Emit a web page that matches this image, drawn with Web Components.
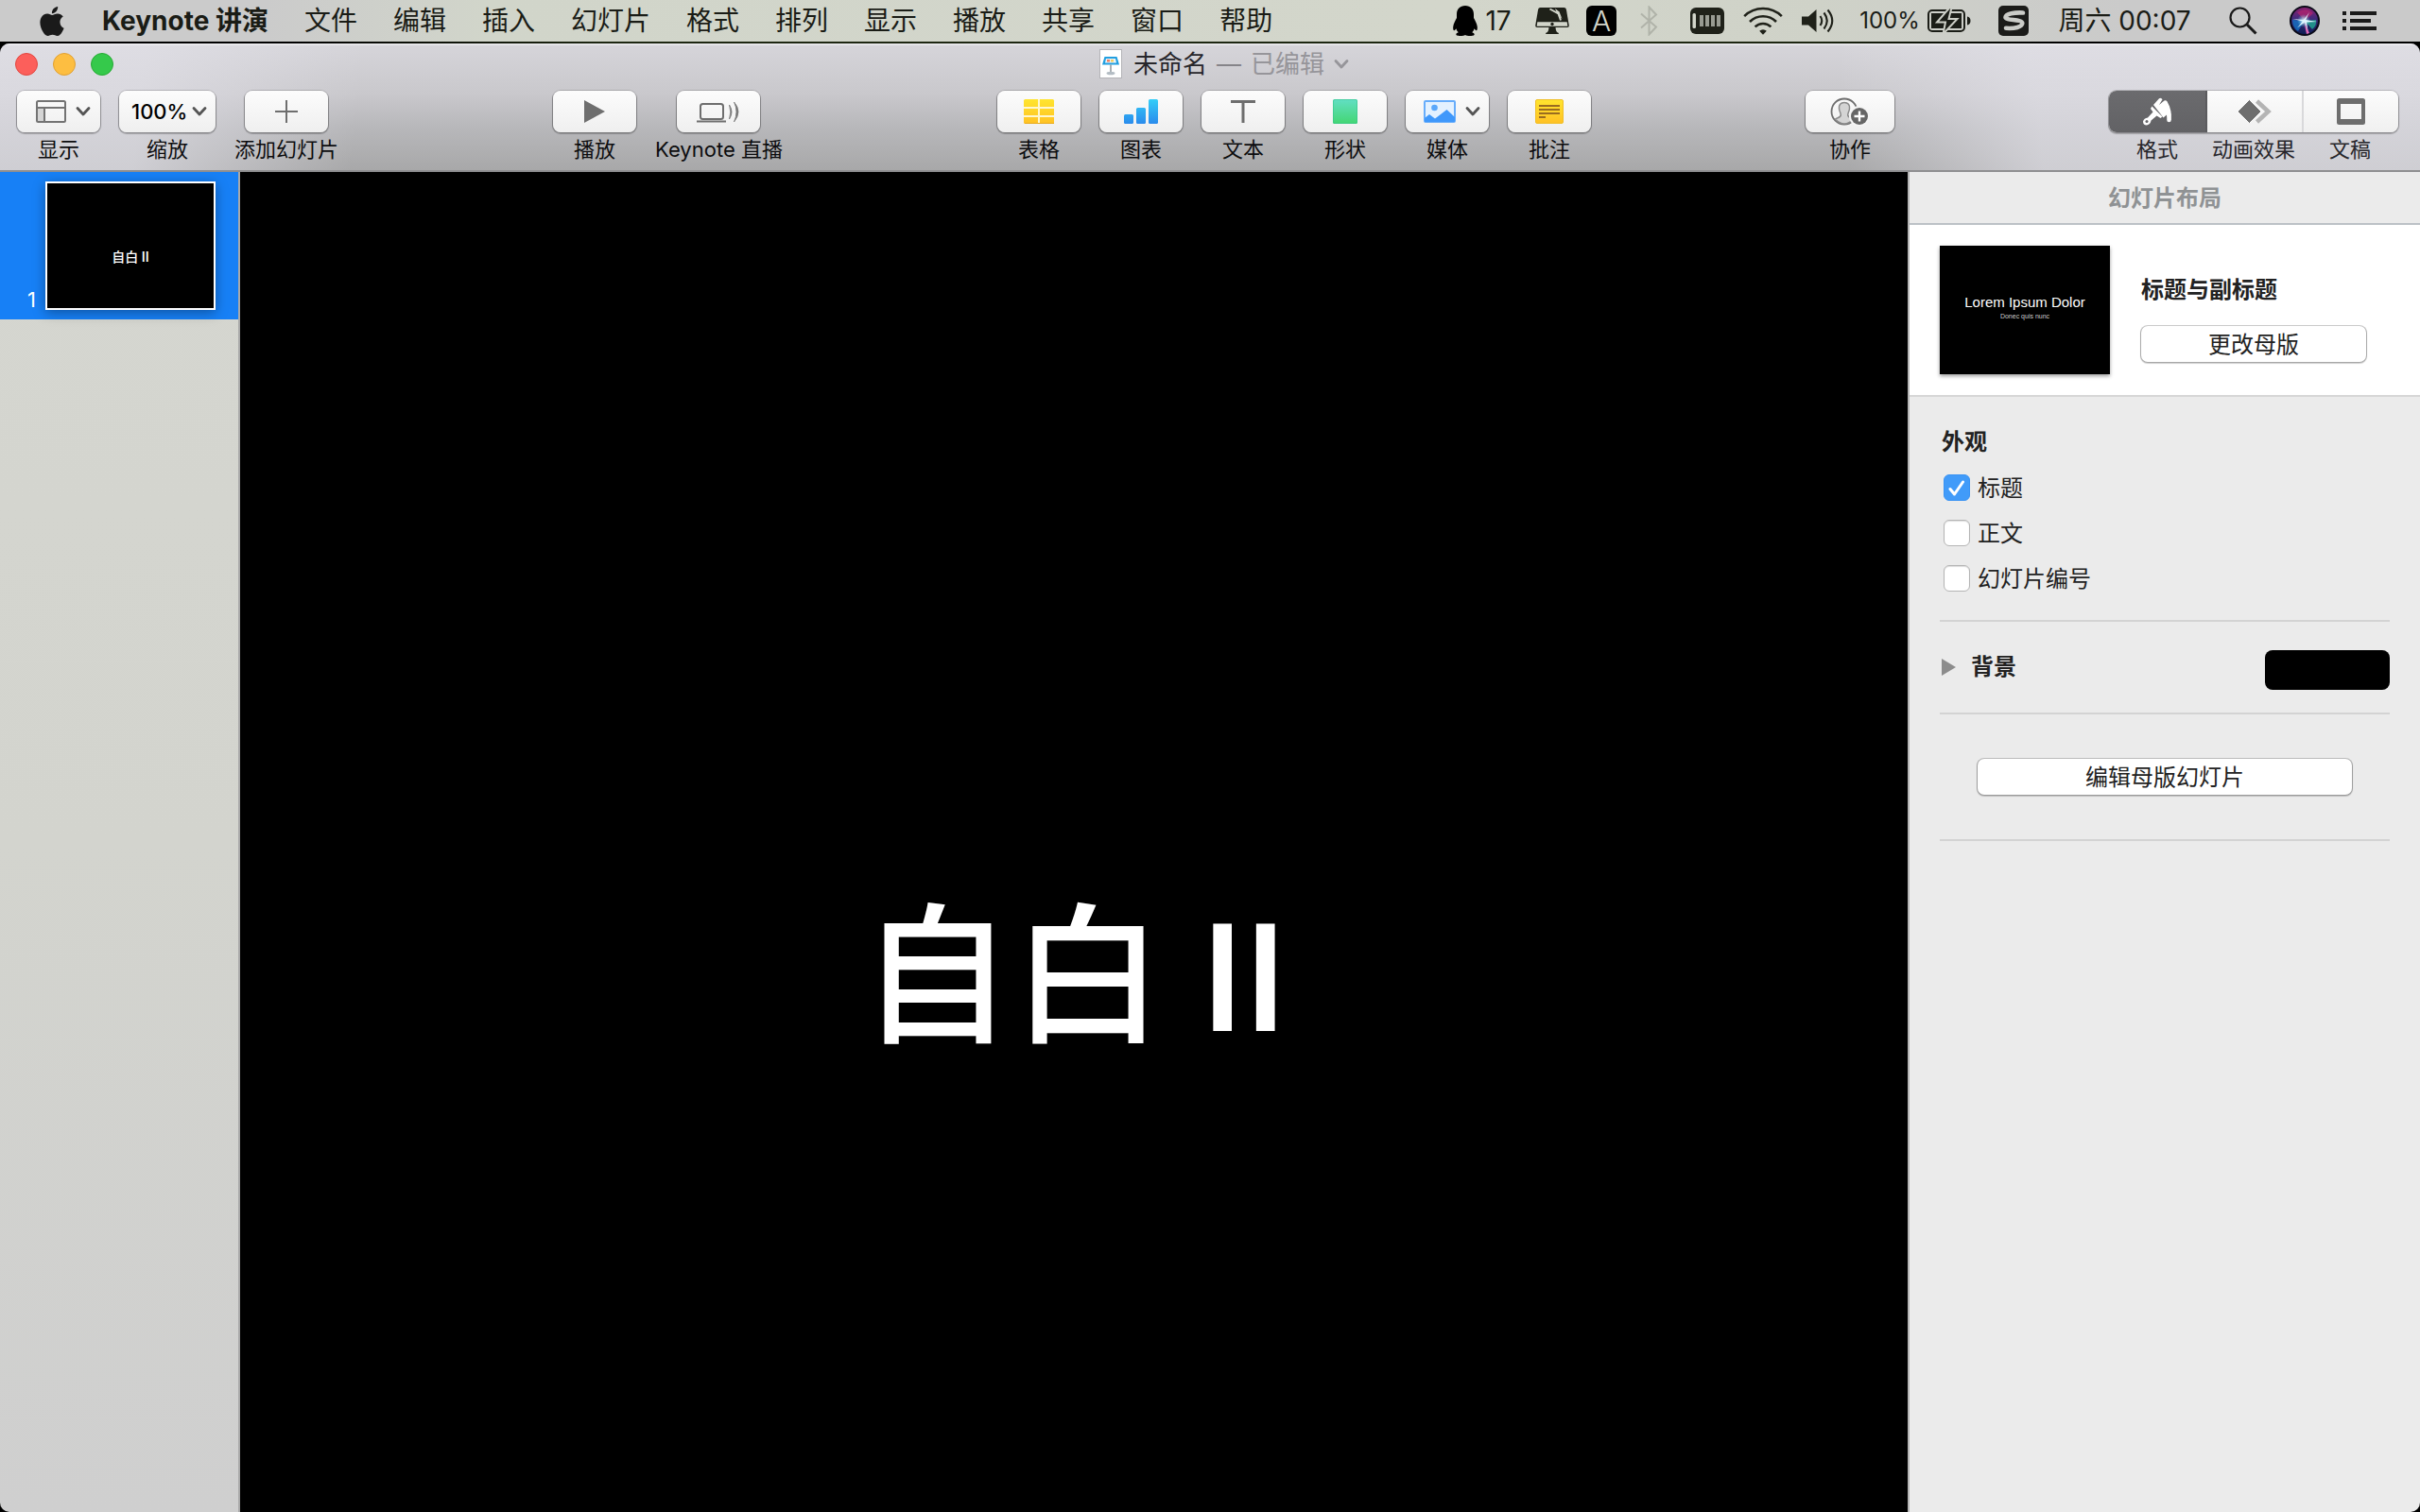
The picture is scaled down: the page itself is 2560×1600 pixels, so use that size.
<!DOCTYPE html>
<html lang="zh-CN">
<head>
<meta charset="utf-8">
<title>Keynote 讲演</title>
<style>
  html, body { height: 100%; margin: 0; }
  body {
    background: #000;
    font-family: Inter, "Noto Sans CJK SC", sans-serif;
    color: #1e1e20;
  }
</style>
</head>
<body>
<keynote-desktop></keynote-desktop>

<script>
const define = (name, markup, setup) => {
  const template = document.createElement('template');
  template.innerHTML = markup;
  customElements.define(name, class extends HTMLElement {
    constructor() {
      super();
      this.attachShadow({ mode: 'open' }).append(template.content.cloneNode(true));
    }
    connectedCallback() {
      if (setup) setup(this, this.shadowRoot);
    }
  });
};

/* Each icon: [width, height, viewBox, drawing] */
const ICONS = {
  apple: [26, 31, '2 0 20 24', '<path fill="#1a1a1a" d="M12.152 6.896c-.948 0-2.415-1.078-3.96-1.04-2.04.027-3.91 1.183-4.961 3.014-2.117 3.675-.546 9.103 1.519 12.09 1.013 1.454 2.208 3.09 3.792 3.039 1.52-.065 2.09-.987 3.935-.987 1.831 0 2.35.987 3.96.948 1.637-.026 2.676-1.48 3.676-2.948 1.156-1.688 1.636-3.325 1.662-3.415-.039-.013-3.182-1.221-3.22-4.857-.026-3.04 2.48-4.494 2.597-4.559-1.429-2.09-3.623-2.324-4.39-2.376-2-.156-3.675 1.09-4.61 1.09zM15.53 3.83c.843-1.012 1.4-2.427 1.245-3.83-1.207.052-2.662.805-3.532 1.818-.78.896-1.454 2.338-1.273 3.714 1.338.104 2.715-.688 3.559-1.701"/>'],
  penguin: [26, 32, '0 0 26 32', '<path d="M13 0C7.500 0 4 3.500 4 9v4c-1 2-3.500 6-3.800 9.500-.2 2.500.3 4 1.200 3.800.6-.1 1.400-1 2-2 .3 1.500 1.200 2.900 2.300 3.900C4.500 28.700 3.300 29.300 3.300 30.300 3.300 32 6 32 8 32c2.200 0 4-.4 5-1 1 .6 2.800 1 5 1 2 0 4.700 0 4.700-1.700 0-1-1.200-1.600-2.400-2.100 1.100-1 2-2.400 2.300-3.900.6 1 1.400 1.900 2 2 .9.200 1.400-1.300 1.200-3.800C25.500 19 23 15 22 13V9c0-5.500-3.500-9-9-9z"/>'],
  imac: [36, 28, '0 0 36 28', '<path fill="#1f2119" d="M5.500 0h25q2 0 2.400 2L35.800 19q.2 2-1.800 2H2q-2 0-1.800-2L3.100 2Q3.500 0 5.500 0z"/><path fill="#d2d5ca" d="M2.300 15.200h31.400l.6 4.600H1.700z"/><circle cx="18" cy="17.500" r="1.700" fill="#1f2119"/><path fill="#1f2119" d="M14.500 21h7q.3 4 1.500 5 2 .6 2 2H11q0-1.400 2-2 1.200-1 1.500-5z"/><path d="M15.500 1.500l9 5 2.500 7" fill="none" stroke="#d2d5ca" stroke-width="2"/><path d="M21 1l4.500 3.500L28.500 12 23 6" fill="#d2d5ca"/>'],
  bluetooth: [20, 32, '0 0 20 32', '<path d="M1 8.500l16 14-7.500 8V1.500l7.500 8-16 14" fill="none" stroke="#b0b3a9" stroke-width="2"/>'],
  memory: [36, 28, '0 0 36 28', '<rect width="36" height="28" rx="6" fill="#1f2119"/><rect x="2.500" y="6" width="3.500" height="16" rx="1.500" fill="#d2d5ca"/><path fill="#989b92" d="M10 8h4v12h-4zM16 8h4v12h-4zM22 8h4v12h-4zM28 8h4v12h-4z"/>'],
  wifi: [42, 30, '0 0 42 30', '<g fill="none" stroke="#1f2119" stroke-width="2.600"><path d="M1.200 10.200a28 28 0 0 1 39.600 0"/><path d="M7 16a20 20 0 0 1 28 0"/><path d="M12.600 21.400a12 12 0 0 1 16.800 0"/></g><path fill="#1f2119" d="M17.200 25.800a5.400 5.400 0 0 1 7.600 0L21 29.700z"/>'],
  volume: [34, 26, '0 0 34 26', '<path fill="#1f2119" d="M0 8.500h7L15.500 1v24L7 17.500H0z"/><g fill="none" stroke="#1f2119" stroke-width="2.100"><path d="M19.500 8q3.500 5 0 10"/><path d="M23.500 4.500q6.500 8.500 0 17"/><path d="M27.500 1.500q9.500 11.500 0 23"/></g>'],
  battery: [46, 26, '0 0 46 26', '<rect x="1" y="2" width="38" height="22" rx="4" fill="none" stroke="#1b1d17" stroke-width="2"/><path fill="#1b1d17" d="M42 8.500q3.500.8 3.500 4.500T42 17.500zM4 5h32v16H4z"/><path d="M23.500-1L10 14.500h9L16.500 27 31.500 11h-9l3-12z" fill="#1b1d17" stroke="#cdcfc7" stroke-width="2"/>'],
  sogou: [32, 32, '0 0 32 32', '<rect width="32" height="32" rx="5" fill="#1b1b19"/><path d="M26 7.500C17 7 8 8.500 7.500 12.200 7.300 16 25 14 25.300 18.500 25.500 22.500 17 24.500 8 23.800" fill="none" stroke="#cbccc8" stroke-width="4.600" stroke-linecap="round"/>'],
  search: [30, 30, '0 0 30 30', '<circle cx="11.500" cy="11.500" r="10" fill="none" stroke="#1a1a1a" stroke-width="2.200"/><path d="M19 19l9.500 9.500" stroke="#1a1a1a" stroke-width="3"/>'],
  siri: [32, 32, '0 0 32 32', '<defs><linearGradient id="s" x1="0" y1="0" x2="0" y2="1"><stop offset="0" stop-color="#8a2070"/><stop offset=".4" stop-color="#432a7c"/><stop offset="1" stop-color="#0c1d55"/></linearGradient><radialGradient id="g"><stop offset="0" stop-color="#fff"/><stop offset="1" stop-color="#5ad0e8" stop-opacity="0"/></radialGradient></defs><circle cx="16" cy="16" r="16" fill="#0a0a18"/><circle cx="16" cy="16" r="14" fill="url(#s)"/><path d="M16 16L8 7q10-6 17 1z" fill="#b0246f" opacity=".75"/><path d="M16 16l12-1q1 6-4 10z" fill="#1fa991" opacity=".8"/><path d="M16 16L3 15q0 8 6 12z" fill="#1473c4" opacity=".8"/><path d="M15 16l3 14 3-1z" fill="#e068b8"/><circle cx="15" cy="16" r="7" fill="url(#g)"/><path d="M3 14l12 1 6-8-4 8 12 2-11 .500 1.500 9-3.500-9-8 6 6-7z" fill="#dff6ff"/>'],
  list: [36, 20, '0 0 36 20', '<path fill="#1a1a1a" d="M0 0h4v4H0zM8 0h28v4H8zM0 8h4v4H0zM8 8h22v4H8zM0 16h4v4H0zM8 16h28v4H8z"/>'],
  doc: [24, 32, '0 0 24 32', '<rect x=".5" y=".5" width="23" height="30" fill="#fff" stroke="#b4b4b8"/><path d="M5.500 8h13l2.500 8.500H3z" fill="#229fe0"/><path d="M7 10h10l1 4.500H6z" fill="#e9f4fb"/><path d="M8 11h3v2.500H8z" fill="#f08060"/><path d="M12 11h3v2.500h-3z" fill="#f4ce62"/><path d="M12 16.500V25" stroke="#8d959b" stroke-width="1.500"/><ellipse cx="12" cy="25.500" rx="4.500" ry="1.800" fill="#b4bdc4"/>'],
  chevron: [16, 12, '0 0 16 12', '<path d="M2 2.500l6 6.500 6-6.500" fill="none" stroke="currentColor" stroke-width="2.800" stroke-linecap="round" stroke-linejoin="round"/>'],
  layout: [32, 24, '0 0 32 24', '<path d="M1 8h8v15H1z" fill="#d5d5d5"/><rect x="1" y="1" width="30" height="22" rx="1.500" fill="none" stroke="#737373" stroke-width="2"/><path d="M1 8h30M9 8v15" stroke="#737373" stroke-width="2"/>'],
  plus: [24, 24, '0 0 24 24', '<path d="M12 0v24M0 12h24" stroke="#6e6e6e" stroke-width="2"/>'],
  play: [22, 24, '0 0 22 24', '<path d="M0 0l22 12L0 24z" fill="#6e6e6e"/>'],
  live: [46, 24, '0 0 46 24', '<rect x="4" y="4" width="24" height="16" rx="2.500" fill="none" stroke="#6e6e6e" stroke-width="2"/><path d="M0 22.500h31" stroke="#6e6e6e" stroke-width="2"/><path d="M34.500 5q5 7.500 0 15q2.500-7.500 0-15zM39.500 2q9 10 0 21q5-11 0-21z" fill="#777" stroke="#777" stroke-width=".8"/>'],
  table: [34, 26, '0 0 34 26', '<defs><linearGradient id="t" x1="0" y1="0" x2="0" y2="1"><stop stop-color="#ffe52e"/><stop offset="1" stop-color="#ffc125"/></linearGradient></defs><rect x="1" width="32" height="26" rx="1.500" fill="url(#t)"/><path d="M17 0v26M1 9h32M1 18h32" stroke="#fff7d0" stroke-width="2"/><path d="M2 25.500h31" stroke="#e8ab1c"/>'],
  chart: [36, 26, '0 0 36 26', '<defs><linearGradient id="c" gradientUnits="userSpaceOnUse" x1="0" y1="0" x2="0" y2="26"><stop stop-color="#34cdf8"/><stop offset="1" stop-color="#2a8bec"/></linearGradient></defs><g fill="url(#c)"><rect y="16" width="10" height="10" rx="1.500"/><rect x="13" y="9" width="10" height="17" rx="1.500"/><rect x="26" width="10" height="26" rx="1.500"/></g>'],
  text: [26, 24, '0 0 26 24', '<path fill="#6e6e6e" d="M0 0h26v3H0zM11.500 2h3v22h-3z"/>'],
  shape: [26, 26, '0 0 26 26', '<defs><linearGradient id="h" x1="0" y1="0" x2="0" y2="1"><stop stop-color="#62dfc4"/><stop offset="1" stop-color="#43d672"/></linearGradient></defs><rect width="26" height="26" rx="1.500" fill="url(#h)"/><rect x=".5" y=".5" width="25" height="25" rx="1.500" fill="none" stroke="#36c48c" opacity=".6"/>'],
  media: [34, 24, '0 0 34 24', '<rect x="1" y="1" width="32" height="22" rx="1" fill="#e3f1ff" stroke="#67adfb" stroke-width="2"/><circle cx="11.500" cy="8" r="3.300" fill="#5aa7fa"/><path d="M1 19l5-4 6 4.500L24.500 10 33 18v5H1z" fill="#3f98fb"/>'],
  note: [30, 26, '0 0 30 26', '<defs><linearGradient id="n" x1="0" y1="0" x2="0" y2="1"><stop stop-color="#ffe52e"/><stop offset="1" stop-color="#ffc125"/></linearGradient></defs><rect x=".5" y=".5" width="29" height="25" rx="1.500" fill="url(#n)" stroke="#f0bf28"/><path d="M4 7h22M4 11h22M4 15h22M4 19h7" stroke="#9a6c20" stroke-width="2"/>'],
  person: [42, 30, '0 0 42 30', '<circle cx="15" cy="15" r="13.500" fill="none" stroke="#6e6e6e" stroke-width="1.800"/><path d="M15 5.500c-4 0-6 2.700-5.500 6.500.3 3 1.700 4.500 1.800 6.500.2 3-3.300 2.800-5.800 4.500Q10 28 15 28t9.500-5c-2.500-1.700-6-1.500-5.800-4.500.1-2 1.500-3.500 1.800-6.500.5-3.800-1.500-6.500-5.500-6.500z" fill="#d4d4d4" stroke="#8a8a8a" stroke-width="1.500"/><circle cx="31" cy="20" r="11" fill="#f5f5f5"/><circle cx="31" cy="20" r="9" fill="#666"/><path d="M31 14.500v11M25.500 20h11" stroke="#fff" stroke-width="2.400"/>'],
  brush: [32, 30, '0 0 32 30', '<g fill="#fff"><path d="M12 8L18 1.200q1.300-1 2.600 0L21.500 2.300 18 8l5.500-4.500q1.500-.8 2.800.6L29 9.500l1.500 5.500V24h-3l-1.500-5.500-3.500 3z"/><path d="M10.500 9.500L21.500 20.500 19.500 22 15.500 19.500 9.500 24.500Q9 28.500 5 29.500 1 29.500 1 25.500 2 22 6 21.500L11.500 15.500 9 12z"/></g><circle cx="5" cy="25.500" r="1.500" fill="#66666a"/><path d="M28.500 18v6" stroke="#fff" stroke-width="4.500" stroke-linecap="round"/>'],
  animate: [36, 26, '0 0 36 26', '<path d="M20.500 2l12 11-12 11" fill="none" stroke="#b4b4b4" stroke-width="4.500"/><path d="M12.500 .5L25 13 12.500 25.500 0 13z" fill="#6e6e6e" stroke="#fafafa" stroke-width="1"/>'],
  frame: [30, 28, '0 0 30 28', '<path fill="#6e6e6e" fill-rule="evenodd" d="M2.500 0h25Q30 0 30 2.500v23q0 2.500-2.500 2.500h-25Q0 28 0 25.500v-23Q0 0 2.500 0zM4 6v16h22V6z"/>'],
  triangle: [15, 18, '0 0 15 18', '<path d="M0 0l15 9-15 9z" fill="#8c8c8c"/>'],
  check: [28, 28, '0 0 28 28', '<path d="M7 15.500l4.500 5.500L20.500 8" fill="none" stroke="#fff" stroke-width="3" stroke-linecap="round" stroke-linejoin="round"/>']
};

define('mac-icon', `
  <style>:host{display:block;flex:none} svg{display:block}</style>
`, (el, root) => {
  const [w, h, box, art] = ICONS[el.getAttribute('name')];
  root.innerHTML += `<svg width="${w}" height="${h}" viewBox="${box}" aria-hidden="true">${art}</svg>`;
});

define('status-item', `
  <style>
    :host{display:flex;flex:none;align-items:center;justify-content:center;gap:8px;width:var(--w);height:44px;
      font-size:28px;line-height:44px;white-space:nowrap}
  </style>
  <slot></slot>
`, el => el.style.setProperty('--w', el.getAttribute('width') + 'px'));

define('menu-bar', `
  <style>
    :host{display:flex;justify-content:space-between;height:44px;padding:0 32px 0 42px;color:#1a1c16;
      background:linear-gradient(90deg,#cbcbcb 11%,#d1d5ca 20%,#d3d6cb 60%,#cfd2c8 75%,#cacaca 88%)}
    nav,.status{display:flex;align-items:center}
    nav{gap:38px}
    button{all:unset;font-size:28px;line-height:44px;white-space:nowrap}
    .apple{margin-right:2px}
    .app{font-weight:700}
    .letter{width:32px;height:32px;border-radius:6px;background:#000;color:#d2d5ca;text-align:center;
      font-size:30px;font-weight:300;line-height:32px}
    .percent{font-size:24px}
  </style>
  <nav aria-label="菜单">
    <button class="apple" aria-label="Apple"><mac-icon name="apple"></mac-icon></button>
    <button class="app">Keynote 讲演</button>
    <button>文件</button><button>编辑</button><button>插入</button><button>幻灯片</button>
    <button>格式</button><button>排列</button><button>显示</button><button>播放</button>
    <button>共享</button><button>窗口</button><button>帮助</button>
  </nav>
  <div class="status">
    <status-item width="88"><mac-icon name="penguin"></mac-icon>17</status-item>
    <status-item width="60"><mac-icon name="imac"></mac-icon></status-item>
    <status-item width="44"><span class="letter">A</span></status-item>
    <status-item width="58"><mac-icon name="bluetooth"></mac-icon></status-item>
    <status-item width="64"><mac-icon name="memory"></mac-icon></status-item>
    <status-item width="53"><mac-icon name="wifi"></mac-icon></status-item>
    <status-item width="63"><mac-icon name="volume"></mac-icon></status-item>
    <status-item width="144"><span class="percent">100%</span><mac-icon name="battery"></mac-icon></status-item>
    <status-item width="64"><mac-icon name="sogou"></mac-icon></status-item>
    <status-item width="171">周六 00:07</status-item>
    <status-item width="79"><mac-icon name="search"></mac-icon></status-item>
    <status-item width="52"><mac-icon name="siri"></mac-icon></status-item>
    <status-item width="64"><mac-icon name="list"></mac-icon></status-item>
  </div>
`);

define('title-bar', `
  <style>
    :host{display:grid;grid-template-columns:1fr auto 1fr;align-items:center;height:44px}
    .lights{display:flex;gap:16px;padding-left:16px}
    .lights button{appearance:none;box-sizing:border-box;width:24px;height:24px;margin:0;padding:0;border-radius:50%;
      border:1px solid var(--edge);background:var(--fill)}
    .close{--fill:#fc5f5b;--edge:#e2463f}
    .min{--fill:#fdbe41;--edge:#e0a033}
    .max{--fill:#35c94b;--edge:#27ab35}
    .title{display:flex;align-items:center;gap:10px;padding-left:30px;font-size:26px;line-height:40px;color:#27262b}
    .title button{all:unset;display:flex;align-items:center;gap:10px;color:#96959a}
    h1{margin:0 0 0 2px;font:inherit}
    .dash{color:#858489}
  </style>
  <div class="lights">
    <button class="close" aria-label="关闭"></button>
    <button class="min" aria-label="最小化"></button>
    <button class="max" aria-label="全屏"></button>
  </div>
  <div class="title">
    <mac-icon name="doc"></mac-icon><h1>未命名</h1><span class="dash">—</span>
    <button>已编辑<mac-icon name="chevron"></mac-icon></button>
  </div>
`);

define('tool-item', `
  <style>
    :host{display:flex;flex-direction:column;align-items:center;gap:5px;color:#0c0c0e}
    button{all:unset;box-sizing:border-box;display:flex;align-items:center;justify-content:center;gap:10px;
      width:var(--tool-width,88px);height:44px;border-radius:8px;color:#555;
      background:linear-gradient(#fcfcfc,#efefef);box-shadow:0 0 0 1px #00000026,0 1px 1px 1px #00000038}
    :host([menu]) button{padding-left:10px}
    .label{font-size:22px;line-height:26px;white-space:nowrap}
  </style>
  <button aria-labelledby="l"><slot></slot></button>
  <span class="label" id="l"></span>
`, (el, root) => { root.getElementById('l').textContent = el.getAttribute('label'); });

define('zoom-select', `
  <style>
    :host{display:flex;flex-direction:column;align-items:center;gap:5px;color:#0c0c0e}
    .box{box-sizing:border-box;display:flex;align-items:center;justify-content:center;gap:4px;width:102px;height:44px;padding-left:4px;border-radius:8px;
      color:#555;background:linear-gradient(#fcfcfc,#efefef);box-shadow:0 0 0 1px #00000026,0 1px 1px 1px #00000038}
    select{appearance:none;border:0;padding:0;margin:0;background:none;font:500 22px/30px Inter,sans-serif;color:#000}
    label{font-size:22px;line-height:26px}
  </style>
  <div class="box"><select id="z"><option>100%</option></select><mac-icon name="chevron"></mac-icon></div>
  <label for="z">缩放</label>
`);

define('inspector-tabs', `
  <style>
    :host{display:grid;grid-template-columns:repeat(3,102px);row-gap:5px;text-align:center;color:#27262b}
    .bar{display:grid;grid-template-columns:repeat(3,1fr);height:44px;border-radius:8px;overflow:hidden;
      background:linear-gradient(#fcfcfc,#f0f0f0)}
    .wrap{grid-column:1/-1;border-radius:8px;box-shadow:0 0 0 1px #00000026,0 1px 1px 1px #00000038}
    button{all:unset;display:flex;align-items:center;justify-content:center}
    button + button{border-left:2px solid #d9d9db}
    button.on{background:linear-gradient(#6b6b6e,#626265)}
    button.on + button{border-left-color:#5b5b5e}
    span{font-size:22px;line-height:26px;white-space:nowrap}
  </style>
  <div class="wrap"><div class="bar">
    <button class="on" aria-labelledby="a"><mac-icon name="brush"></mac-icon></button>
    <button aria-labelledby="b"><mac-icon name="animate"></mac-icon></button>
    <button aria-labelledby="c"><mac-icon name="frame"></mac-icon></button>
  </div></div>
  <span id="a">格式</span><span id="b">动画效果</span><span id="c">文稿</span>
`);

define('tool-bar', `
  <style>
    :host{display:flex;justify-content:space-between;align-items:flex-start;padding:6px 23px 9px 18px}
    .group{display:flex;gap:20px}
    .wide{--tool-width:94px}
  </style>
  <div class="group">
    <tool-item menu label="显示"><mac-icon name="layout"></mac-icon><mac-icon name="chevron"></mac-icon></tool-item>
    <zoom-select></zoom-select>
    <tool-item label="添加幻灯片"><mac-icon name="plus"></mac-icon></tool-item>
  </div>
  <div class="group">
    <tool-item label="播放"><mac-icon name="play"></mac-icon></tool-item>
    <tool-item label="Keynote 直播"><mac-icon name="live"></mac-icon></tool-item>
  </div>
  <div class="group">
    <tool-item label="表格"><mac-icon name="table"></mac-icon></tool-item>
    <tool-item label="图表"><mac-icon name="chart"></mac-icon></tool-item>
    <tool-item label="文本"><mac-icon name="text"></mac-icon></tool-item>
    <tool-item label="形状"><mac-icon name="shape"></mac-icon></tool-item>
    <tool-item menu label="媒体"><mac-icon name="media"></mac-icon><mac-icon name="chevron"></mac-icon></tool-item>
    <tool-item label="批注"><mac-icon name="note"></mac-icon></tool-item>
  </div>
  <tool-item class="wide" label="协作"><mac-icon name="person"></mac-icon></tool-item>
  <inspector-tabs></inspector-tabs>
`);

define('slide-navigator', `
  <style>
    :host{display:block;border-right:2px solid #a9a9a9;background:linear-gradient(#d5d6d0,#d3d4ce 50%,#cfcfcf)}
    .row{display:flex;align-items:flex-end;justify-content:flex-end;gap:10px;padding:10px 24px 10px 0;background:#1780f6;color:#fff}
    .num{font-size:22px;line-height:22px}
    .thumb{box-sizing:border-box;display:flex;align-items:center;justify-content:center;width:180px;height:136px;padding-top:24px;
      border:2px solid #fff;background:#000;box-shadow:0 3px 12px #00000059;
      font:500 14px/20px Roboto,"Noto Sans CJK SC",sans-serif}
  </style>
  <div class="row"><span class="num">1</span><div class="thumb">自白 II</div></div>
`);

define('slide-canvas', `
  <style>
    :host{display:flex;align-items:center;justify-content:center;padding-top:292px;background:#000;color:#fff}
    h2{margin:0;font:500 160px/200px Roboto,"Noto Sans CJK SC",sans-serif;white-space:nowrap}
  </style>
  <h2>自白 II</h2>
`);

define('push-button', `
  <style>
    :host{display:block}
    button{all:unset;box-sizing:border-box;display:block;width:100%;height:38px;border-radius:7px;background:#fff;
      text-align:center;font-size:24px;line-height:40px;color:#222;
      box-shadow:0 0 0 1px #00000030,0 1px 1px 1px #00000030}
  </style>
  <button><slot></slot></button>
`);

define('check-option', `
  <style>
    :host{display:flex;align-items:center;gap:8px;height:48px;padding-left:4px}
    .box{display:grid;width:28px;height:28px}
    .box > *{grid-area:1/1}
    input{appearance:none;box-sizing:border-box;width:28px;height:28px;margin:0;border:1px solid #b4b4b4;border-radius:6px;
      background:#fff;box-shadow:inset 0 1px 1px #0002}
    input:checked{background:#419bf9;border-color:#3a93f3;box-shadow:none}
    mac-icon{pointer-events:none;visibility:hidden}
    input:checked + mac-icon{visibility:visible}
    label{padding-top:2px;font-size:24px;line-height:36px;color:#222}
  </style>
  <span class="box"><input type="checkbox" id="i"><mac-icon name="check"></mac-icon></span>
  <label for="i"><slot></slot></label>
`, (el, root) => { root.getElementById('i').checked = el.hasAttribute('checked'); });

define('format-inspector', `
  <style>
    :host{display:block;border-left:2px solid #b5b5b5;background:#ebebeb;font-size:24px;line-height:36px;color:#222}
    h2,h3,p{margin:0;font-size:24px;line-height:36px;font-weight:700}
    header{height:54px;border-bottom:2px solid #bcc1c6}
    header h2{line-height:56px;text-align:center;color:#8f9294}
    .master{display:flex;align-items:center;gap:33px;padding:22px 57px 22px 32px;background:#fff;border-bottom:2px solid #d6d6d6}
    .preview{flex:none;box-sizing:border-box;width:180px;height:136px;padding-top:50px;background:#000;color:#fff;text-align:center;
      box-shadow:0 2px 4px #0006;font:500 15px/20px "Liberation Sans",sans-serif}
    .preview small{display:block;font-size:7px;line-height:10px;font-weight:400;color:#ccc}
    .info{flex:1;display:flex;flex-direction:column;gap:20px;padding-top:16px}
    section{margin:0 32px;border-bottom:2px solid #d3d3d3}
    .look{padding:30px 0 20px}
    .look h3{padding:0 2px 6px}
    .back{display:flex;align-items:flex-start;justify-content:space-between;padding:30px 0 24px}
    .back button{all:unset;display:flex;align-items:center;gap:16px;padding-left:2px;line-height:36px;font-weight:700}
    input{appearance:none;width:132px;height:42px;padding:0;border:0;border-radius:8px;overflow:hidden;background:#000}
    input::-webkit-color-swatch-wrapper{padding:0}
    input::-webkit-color-swatch{border:0}
    .edit{padding:47px 40px}
  </style>
  <header><h2>幻灯片布局</h2></header>
  <div class="master">
    <div class="preview">Lorem Ipsum Dolor<small>Donec quis nunc</small></div>
    <div class="info"><p>标题与副标题</p><push-button>更改母版</push-button></div>
  </div>
  <section class="look">
    <h3>外观</h3>
    <check-option checked>标题</check-option>
    <check-option>正文</check-option>
    <check-option>幻灯片编号</check-option>
  </section>
  <section class="back">
    <button aria-expanded="false"><mac-icon name="triangle"></mac-icon>背景</button>
    <input type="color" value="#000000" aria-label="背景">
  </section>
  <section class="edit"><push-button>编辑母版幻灯片</push-button></section>
`);

define('keynote-window', `
  <style>
    :host{display:flex;flex-direction:column;overflow:hidden;border-radius:10px}
    .chrome{flex:none;border-bottom:2px solid #8f8f91;box-shadow:inset 0 2px #ffffff66;
      background:
        linear-gradient(96deg,#e2e1e8aa 6%,#e2e1e800 15%),
        linear-gradient(264deg,#e2e1e8aa 16%,#e2e1e800 24%),
        linear-gradient(#d6d5da,#c9c8cc 40%,#b8b8bb 65%,#a8a8a9)}
    .body{flex:1;display:grid;grid-template-columns:254px 1fr 542px;min-height:0}
  </style>
  <div class="chrome"><title-bar></title-bar><tool-bar></tool-bar></div>
  <div class="body">
    <slide-navigator></slide-navigator>
    <slide-canvas></slide-canvas>
    <format-inspector></format-inspector>
  </div>
`);

define('keynote-desktop', `
  <style>
    :host{display:flex;flex-direction:column;gap:2px;height:100vh;background:linear-gradient(90deg,#000 12%,#1c2610 25%,#1c2610 75%,#000 85%) 0 0/100% 46px no-repeat #000}
    keynote-window{flex:1;min-height:0}
  </style>
  <menu-bar></menu-bar>
  <keynote-window></keynote-window>
`);
</script>
</body>
</html>
